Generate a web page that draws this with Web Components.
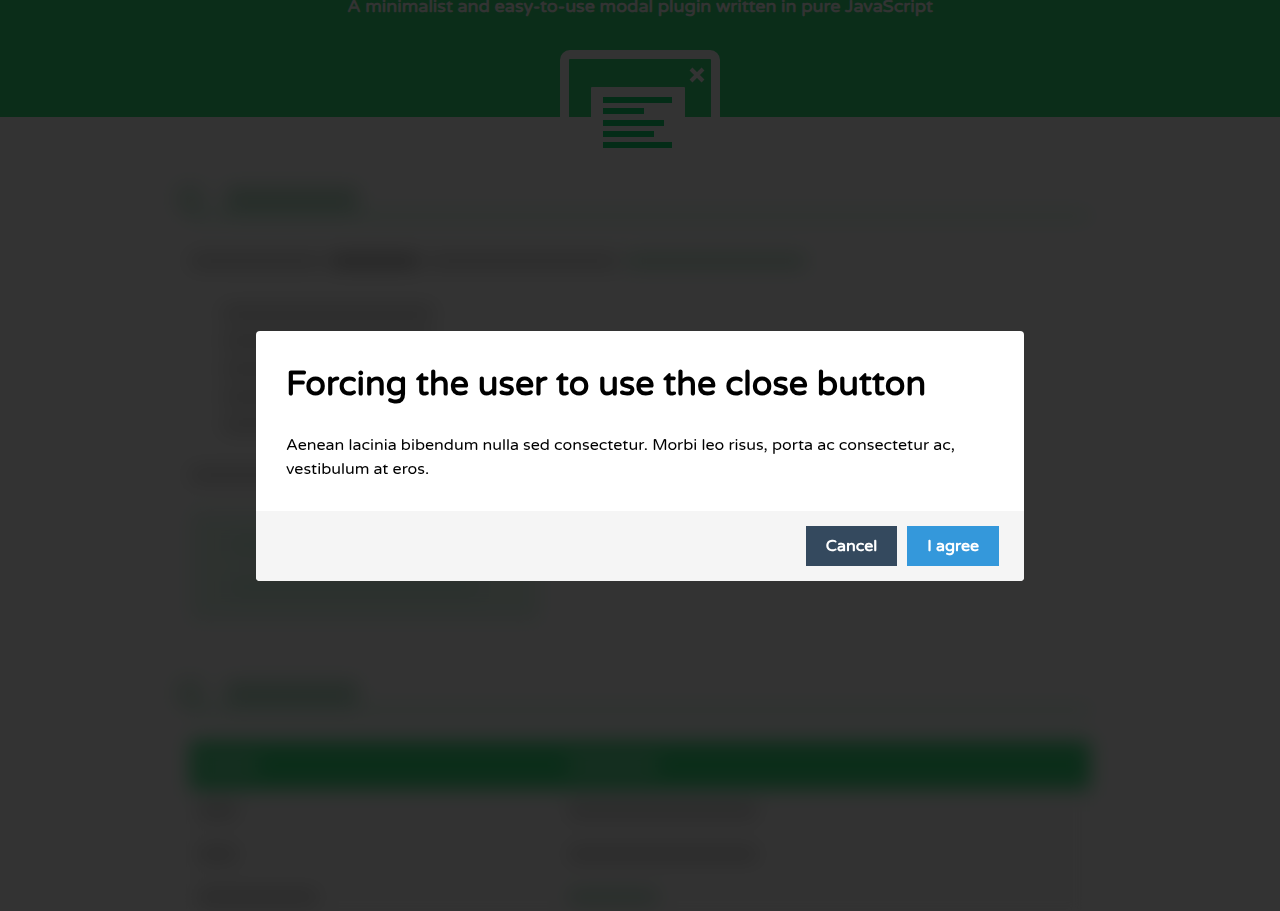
<!DOCTYPE html>
<html lang="en">
<head>
<meta charset="utf-8">
<meta name="viewport" content="width=device-width, initial-scale=1">
<title>tingle.js</title>
<style>
html, body { margin: 0; height: 100%; overflow: hidden; }
body { background: #fff; color: #000; font: 16px/24px "Varela Round", "Noto Sans", "Open Sans", sans-serif; }
</style>
</head>
<body>
<page-hero>A minimalist and easy-to-use modal plugin written in pure JavaScript</page-hero>
<page-content></page-content>
<modal-dialog>
  <span slot="title">Forcing the user to use the close button</span>
  Aenean lacinia bibendum nulla sed consectetur. Morbi leo risus, porta ac consectetur ac, vestibulum at eros.
  <action-button slot="actions">Cancel</action-button>
  <action-button slot="actions" primary>I agree</action-button>
</modal-dialog>
<script>
const define = (name, html) => customElements.define(name, class extends HTMLElement {
  constructor() {
    super();
    this.attachShadow({ mode: "open" }).innerHTML = html;
  }
});

define("modal-logo", `
<style>
:host { display: block; width: 160px; height: 110px; }
svg { display: block; }
</style>
<svg width="160" height="110" viewBox="0 0 160 110" aria-hidden="true">
  <path d="M4.5 110V10a5.5 5.5 0 0 1 5.5-5.5h140a5.5 5.5 0 0 1 5.5 5.5v100" fill="none" stroke="#fff" stroke-width="9"/>
  <path d="M131 19l12 12M143 19l-12 12" stroke="#fff" stroke-width="4"/>
  <rect x="31" y="37" width="94" height="73" rx="1" fill="#fff"/>
  <path d="M43 47h69v6H43zM43 58h41v6H43zM43 70h61v6H43zM43 81h51v6H43zM43 92h69v6H43z" fill="#16dc73"/>
</svg>`);

define("page-hero", `
<style>
:host { display: flex; flex-direction: column; align-items: center; gap: 38px; height: 117px; background: #3adf7e; color: #fff; }
p { margin: 0; font-size: 18px; line-height: 12px; font-weight: 700; text-align: center; white-space: nowrap; }
</style>
<p><slot></slot></p>
<modal-logo></modal-logo>`);

define("section-title", `
<style>
:host { display: flex; align-items: center; gap: 20px; height: 32px; margin-left: -16px; }
i { width: 32px; height: 32px; border-radius: 16px; background: #1a9a50; opacity: .18; }
b { width: 132px; height: 24px; background: #1a9a50; opacity: .28; }
</style>
<i></i><b></b>`);

define("page-content", `
<style>
:host { display: block; max-width: 900px; margin: 0 auto; padding-top: 66px; filter: blur(10px); }
.rule { height: 2px; background: #3adf7e; opacity: .9; }
.row { display: flex; gap: 8px; height: 16px; }
.row span, li { background: #000; opacity: .16; }
.row .strong { opacity: .28; }
.row .link { background: #1a9a50; opacity: .24; }
.intro { margin-top: 36px; }
ul { display: grid; gap: 12px; margin: 36px 0 34px 32px; padding: 0; list-style: none; }
li { height: 16px; width: 212px; }
.code { display: grid; align-content: space-evenly; width: 350px; height: 110px; margin: 28px 0 56px; background: #e4f7ec; }
.code span { height: 16px; margin-left: 40px; width: 250px; background: #3adf7e; opacity: .12; }
.head, .line { display: grid; grid-template-columns: 370px 1fr; align-items: center; height: 43px; padding-left: 8px; }
.head { height: 48px; margin-top: 30px; background: #3adf7e; }
.line { background: #fbfbfb; }
.head span { height: 20px; background: #fff; opacity: .3; }
.line span { height: 16px; background: #000; opacity: .16; }
.line .link { background: #1a9a50; opacity: .25; }
.w40 { width: 40px; } .w60 { width: 60px; } .w90 { width: 90px; } .w120 { width: 120px; } .w132 { width: 132px; } .w180 { width: 180px; } .w190 { width: 190px; }
</style>
<div aria-hidden="true">
  <section-title></section-title>
  <div class="rule"></div>
  <div class="row intro"><span class="w132"></span><span class="w90 strong"></span><span class="w190"></span><span class="w180 link"></span></div>
  <ul><li></li><li></li><li></li><li></li><li></li></ul>
  <div class="row"><span class="w190"></span></div>
  <div class="code"><span></span><span></span></div>
  <section-title></section-title>
  <div class="rule"></div>
  <div class="head"><span class="w60"></span><span class="w90"></span></div>
  <div class="line"><span class="w40"></span><span class="w190"></span></div>
  <div class="line"><span class="w40"></span><span class="w190"></span></div>
  <div class="line"><span class="w120"></span><span class="link w90"></span></div>
</div>`);

define("modal-dialog", `
<style>
:host { position: fixed; inset: 0; display: flex; align-items: center; justify-content: center; background: rgba(0,0,0,.8); }
section { width: 60%; border-radius: 4px; overflow: hidden; background: #fff; }
.body { padding: 30px; }
h1 { margin: 0 0 24px; font-size: 34px; line-height: 48px; font-weight: 700; }
p { margin: 0; }
footer { display: flex; justify-content: flex-end; gap: 10px; padding: 15px 25px; background: #f5f5f5; }
</style>
<section role="dialog" aria-modal="true" aria-labelledby="title">
  <div class="body"><h1 id="title"><slot name="title"></slot></h1><p><slot></slot></p></div>
  <footer><slot name="actions"></slot></footer>
</section>`);

define("action-button", `
<style>
:host { display: block; }
button { display: block; height: 40px; margin: 0; padding: 0 20px; border: 0; background: #34495e; color: #fff; font: inherit; font-weight: 700; cursor: pointer; }
:host([primary]) button { background: #3498db; }
</style>
<button type="button"><slot></slot></button>`);
</script>
</body>
</html>
